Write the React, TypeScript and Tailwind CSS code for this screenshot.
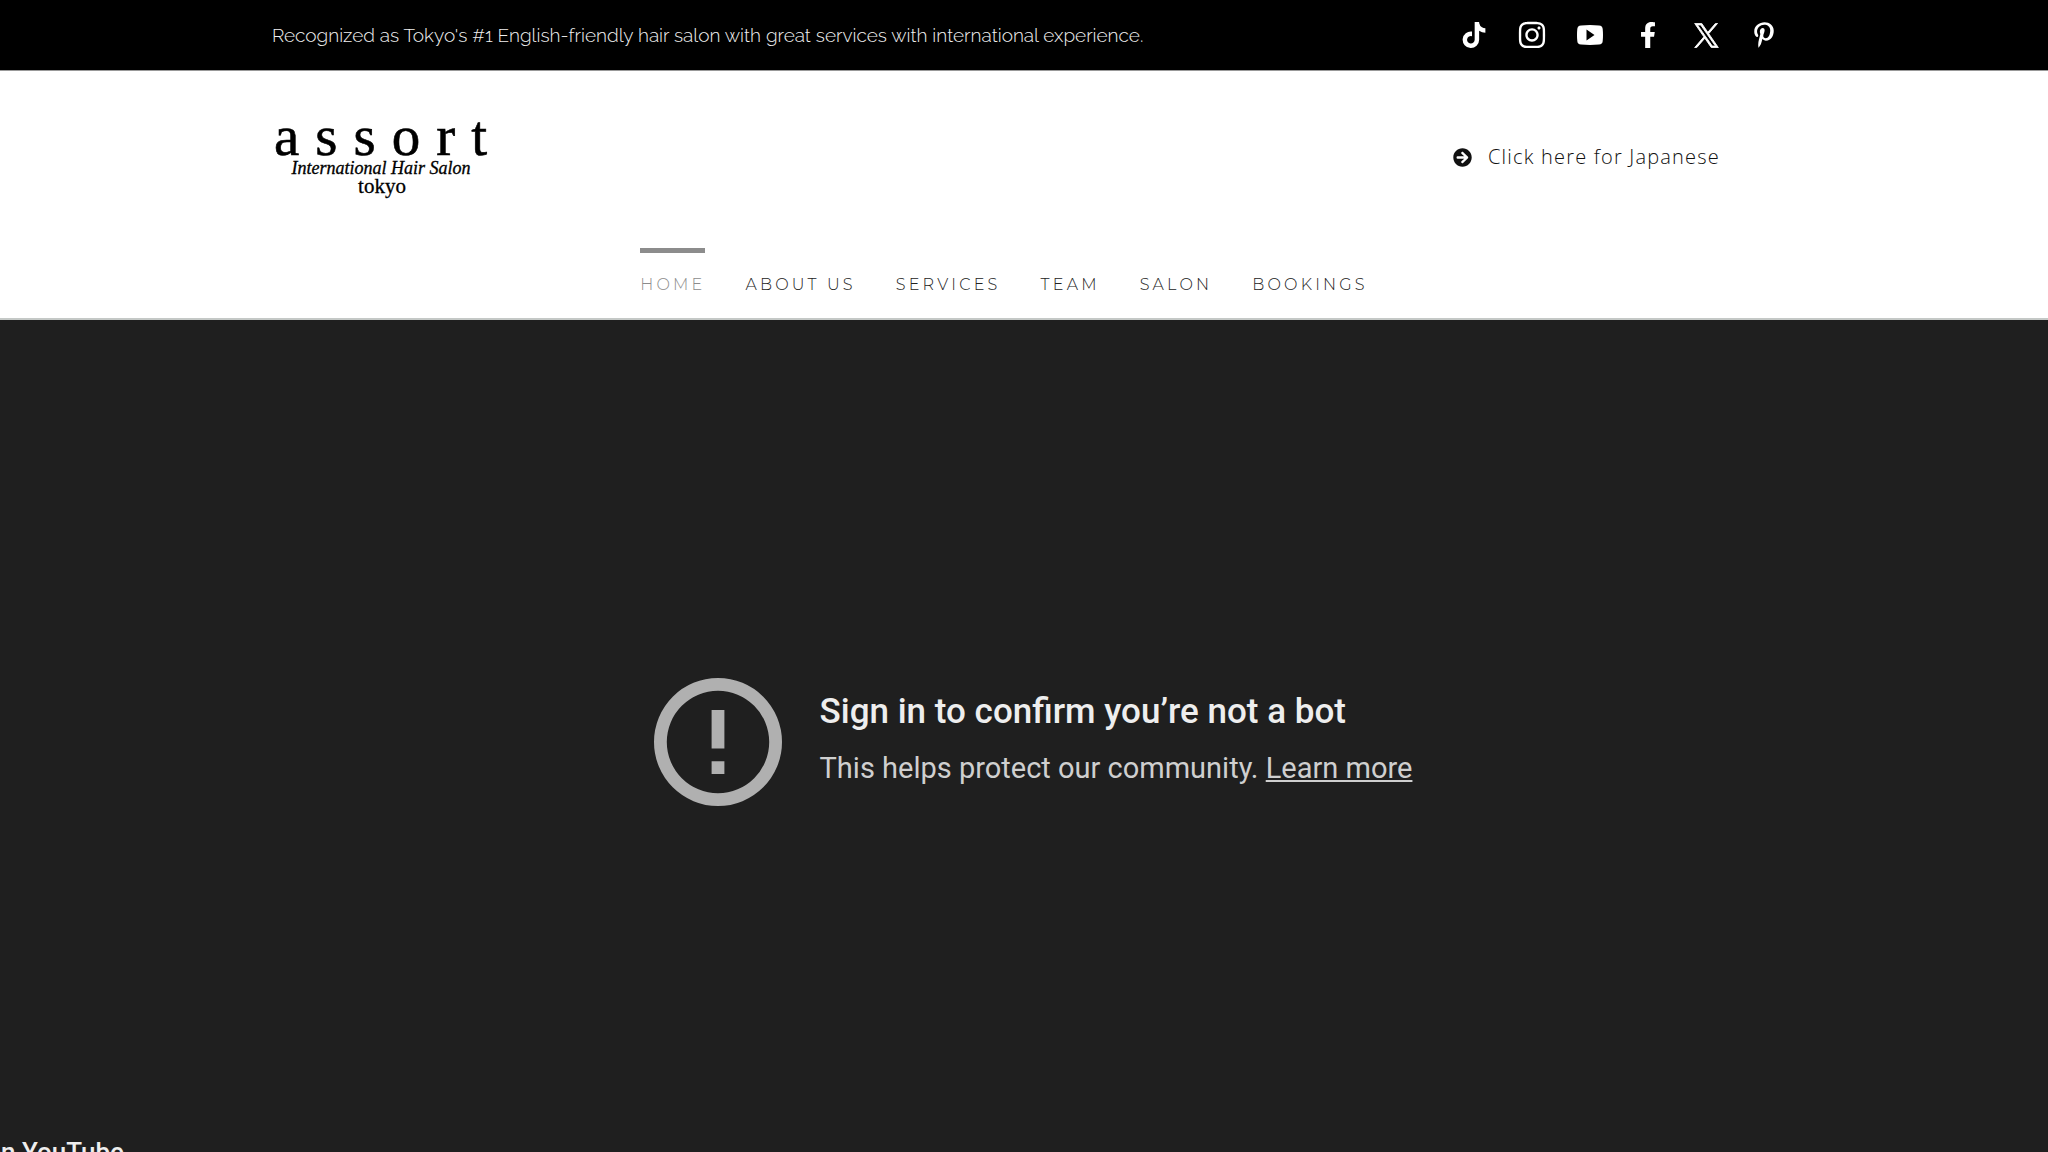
import {
  FaArrowCircleRight,
  FaFacebookF,
  FaInstagram,
  FaPinterestP,
  FaTiktok,
} from "react-icons/fa";

const socials = [
  { label: "TikTok", icon: <FaTiktok className="h-[26px] w-[24px]" /> },
  { label: "Instagram", icon: <FaInstagram className="h-[30px] w-[30px]" /> },
  { label: "YouTube", icon: <YoutubeIcon /> },
  { label: "Facebook", icon: <FaFacebookF className="h-[26px] w-[26px]" /> },
  { label: "X", icon: <XIcon /> },
  { label: "Pinterest", icon: <FaPinterestP className="h-[26px] w-[26px]" /> },
];

const navItems = ["Home", "About Us", "Services", "Team", "Salon", "Bookings"];

function YoutubeIcon() {
  return (
    <svg viewBox="0 0 26 20" className="h-[20px] w-[26px]" fill="currentColor" aria-hidden="true">
      <path
        fillRule="evenodd"
        d="M4 .4Q13-.4 22 .4Q25.6.8 25.7 4Q26.3 10 25.7 16Q25.6 19.2 22 19.6Q13 20.4 4 19.6Q.4 19.2.3 16Q-.3 10 .3 4Q.4.8 4 .4ZM9.5 4.5V15.5L17.5 10Z"
      />
    </svg>
  );
}

function XIcon() {
  return (
    <svg viewBox="-20 -20 1240 1267" className="h-[25px] w-[25px]" fill="currentColor" stroke="currentColor" strokeWidth="45" aria-hidden="true">
      <path d="M714.163 519.284L1160.89 0H1055.03L667.137 450.887L357.328 0H0L468.492 681.821L0 1226.37H105.866L515.491 750.218L842.672 1226.37H1200L714.137 519.284H714.163ZM569.165 687.828L521.697 619.934L144.011 79.6944H306.615L611.412 515.685L658.88 583.579L1055.08 1150.3H892.476L569.165 687.854V687.828Z" />
    </svg>
  );
}

function Logo() {
  return (
    <svg viewBox="0 0 250 84" className="h-[84px] w-[250px] overflow-visible" role="img" aria-label="assort International Hair Salon tokyo">
      <text x="2" y="40" fontSize="57" letterSpacing="16" stroke="#000" strokeWidth="0.6" className="font-['Liberation_Serif',serif]">
        assort
      </text>
      <text x="109" y="59" fontSize="18" fontStyle="italic" textAnchor="middle" stroke="#000" strokeWidth="0.3" className="font-['Liberation_Serif',serif]">
        International Hair Salon
      </text>
      <text x="110" y="78" fontSize="21" textAnchor="middle" stroke="#000" strokeWidth="0.3" className="font-['Liberation_Serif',serif]">
        tokyo
      </text>
    </svg>
  );
}

function TopBar() {
  return (
    <div className="border-b border-[#999999] bg-black">
      <div className="mx-auto flex h-[70px] w-full max-w-[1504px] items-center justify-between">
        <p className="font-[Raleway,Lato,sans-serif] text-[19px] font-light text-[#f0f0f0]">
          Recognized as Tokyo's #1 English-friendly hair salon with great services with international experience.
        </p>
        <ul className="-mr-[3px] flex items-center gap-7 text-white">
          {socials.map((social) => (
            <li key={social.label}>
              <a href="#" aria-label={social.label} className="flex w-[30px] justify-center">
                {social.icon}
              </a>
            </li>
          ))}
        </ul>
      </div>
    </div>
  );
}

function Header() {
  return (
    <header className="border-b-2 border-[#c4c8c6] bg-white">
      <div className="mx-auto flex w-full max-w-[1504px] items-center justify-between pt-11 pr-14">
        <a href="#">
          <Logo />
        </a>
        <a
          href="#"
          className="flex items-center gap-4 font-['Open_Sans',sans-serif] text-[20px] font-light tracking-[0.06em] text-[#111111]"
        >
          <FaArrowCircleRight className="h-[19px] w-[19px]" />
          Click here for Japanese
        </a>
      </div>
      <nav className="mt-[49px] flex justify-center pr-10">
        <ul className="flex gap-10">
          {navItems.map((item, index) => (
            <li key={item}>
              <a
                href="#"
                className={
                  index === 0
                    ? "block h-[70px] border-t-[5px] border-[#8c8c8c] pt-5 font-[Montserrat,Lato,sans-serif] text-[16px] leading-6 font-light tracking-[0.2em] text-[#8c8c8c] uppercase"
                    : "block h-[70px] border-t-[5px] border-transparent pt-5 font-[Montserrat,Lato,sans-serif] text-[16px] leading-6 font-light tracking-[0.2em] text-[#222222] uppercase"
                }
              >
                {item}
              </a>
            </li>
          ))}
        </ul>
      </nav>
    </header>
  );
}

function VideoNotice() {
  return (
    <main className="relative flex flex-1 items-center justify-center overflow-hidden bg-[#1f1f1f] pt-3 pl-[18px] font-[Roboto,sans-serif]">
      <div className="flex items-center gap-[38px]">
        <svg viewBox="0 0 20 20" className="h-[128px] w-[128px]" fill="#b0b0b0" aria-hidden="true">
          <path
            fillRule="evenodd"
            d="M10 0A10 10 0 1 0 10 20A10 10 0 1 0 10 0ZM10 2A8 8 0 1 1 10 18A8 8 0 1 1 10 2ZM9 5H11V11H9ZM9 13H11V15H9Z"
          />
        </svg>
        <div className="pb-1">
          <h1 className="text-[35px] leading-[48px] font-medium text-[#eeeeee]">
            Sign in to confirm you’re not a bot
          </h1>
          <p className="mt-2 text-[29px] leading-[48px] text-[#cfcfcf]">
            This helps protect our community.{" "}
            <a href="#" className="underline">
              Learn more
            </a>
          </p>
        </div>
      </div>
      {/* player badge runs past the lower left corner */}
      <a
        href="#"
        className="absolute -bottom-4 left-[124px] -translate-x-full text-[26px] leading-8 font-medium whitespace-nowrap text-[#eeeeee]"
      >
        Watch on YouTube
      </a>
    </main>
  );
}

export default function App() {
  return (
    <div className="flex h-screen flex-col overflow-hidden bg-white">
      <TopBar />
      <Header />
      <VideoNotice />
    </div>
  );
}
